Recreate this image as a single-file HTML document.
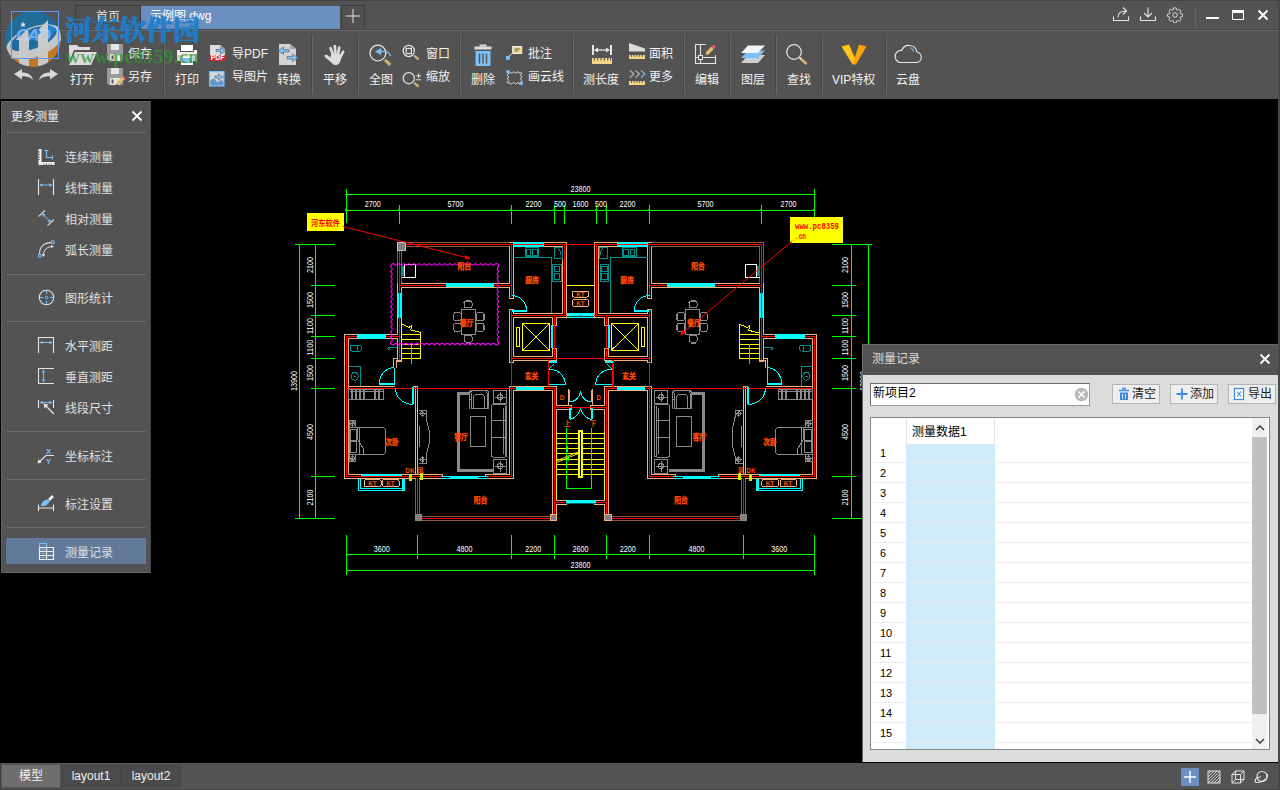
<!DOCTYPE html>
<html lang="zh-CN">
<head>
<meta charset="utf-8">
<title>示例图.dwg</title>
<style>
*{box-sizing:border-box;margin:0;padding:0}
html,body{width:1280px;height:790px;overflow:hidden;background:#000}
body{position:relative;font-family:"Liberation Sans","Noto Sans CJK SC",sans-serif;font-size:13px;color:#e6e6e6}
.abs{position:absolute}
#top{position:absolute;left:0;top:0;width:1280px;height:99px;background:#535353;border-top:1px solid #444;border-left:1px solid #444}
#hline{position:absolute;left:1px;top:29px;width:1279px;height:2px;background:#6a6a6a;border-top:1px solid #464646}
.tab{position:absolute;top:5px;height:24px;line-height:22px;font-size:12px;color:#e8e8e8}
#tab1{left:75px;width:66px;text-align:center;background:#515151;border:1px solid #3e3e3e;border-bottom:none}
#tab2{left:141px;top:6px;height:23px;line-height:21px;width:199px;background:#6a8fc0;padding-left:9px;color:#fff}
#tab3{left:341px;width:24px;background:#515151;border:1px solid #3e3e3e;border-bottom:none}
.lbl{position:absolute;font-size:12px;line-height:16px;color:#f2f2f2;white-space:nowrap}
.sep{position:absolute;top:35px;width:1px;height:59px;background:#464646;border-right:1px solid #686868;box-sizing:content-box}
#canvas{position:absolute;left:0;top:99px;width:1280px;height:664px;background:#000}
#status{position:absolute;left:0;top:763px;width:1280px;height:27px;background:#535353;border-left:1px solid #444;border-bottom:1px solid #444}
.stab{position:absolute;top:2px;height:22px;line-height:20px;text-align:center;font-size:12px;color:#f0f0f0;background:#4b4b4b;border:1px solid #454545}
#lp{position:absolute;left:1px;top:101px;width:150px;height:472px;background:#535353;border:1px solid #656565;border-right:1px solid #444}
#lp .hd{position:absolute;left:9px;top:5px;font-size:12px;color:#f0f0f0}
#lp .ln{position:absolute;left:4px;width:140px;height:1px;background:#6a6a6a}
#lp .it{position:absolute;left:63px;font-size:12px;line-height:16px;color:#e0e0e0;white-space:nowrap}
#rp{position:absolute;left:862px;top:344px;width:416px;height:418px;background:#dcdcdc;border-left:1px solid #6a6a6a}
#rp .hd{position:absolute;left:0;top:0;width:415px;height:31px;background:#535353;border-top:1px solid #6a6a6a}

.btn{position:absolute;top:40px;width:48px;height:20px;background:#eeeeee;border:1px solid #b4b4b4;font-size:12px;line-height:16px;color:#222;padding:1px 0 0 19px;white-space:nowrap}
#tbl{position:absolute;left:7px;top:73px;width:400px;height:333px;background:#fff;border:1px solid #828790;overflow:hidden}
#tbl .rn{position:absolute;left:9px;font-size:11px;line-height:16px;color:#000;font-family:"Liberation Sans",sans-serif}
#tbl .rl{position:absolute;left:2px;width:379px;height:1px;background:rgba(235,235,235,.95)}
</style>
</head>
<body>
<div id="canvas"></div>
<!--CAD--><svg class="abs" style="left:0;top:0" width="1280" height="790" viewBox="0 0 1280 790" fill="none"><g shape-rendering="crispEdges">
<g id="hf"><path d="M399.7 244.5L511.5 244.5M399.7 244.5L399.7 285.5M417.5 478.6L417.5 518.5M417.5 518.5L554.6 518.5" stroke="#8a5a46" stroke-width="5" fill="none" stroke-linecap="square"/><path d="M399.7 285.5L511.5 285.5M399.7 285.5L399.7 359.0M511.5 244.5L511.5 296.0M511.5 311.0L511.5 360.5M511.5 244.5L564.7 244.5M564.7 244.5L564.7 315.5M511.5 315.5L564.7 315.5M511.5 358.5L554.6 358.5M554.6 315.5L554.6 323.5M554.6 350.5L554.6 358.5M346.5 336.6L399.7 336.6M346.5 336.6L346.5 476.6M346.5 476.6L440.6 476.6M487.8 476.6L511.5 476.6M511.5 388.5L511.5 476.6M511.5 388.5L554.6 388.5M554.6 388.5L554.6 514.0M554.6 502.5L564.5 502.5M554.6 407.5L569.0 407.5" stroke="#f2b27c" stroke-width="5" fill="none" stroke-linecap="square"/><path d="M399.7 244.5L511.5 244.5M399.7 244.5L399.7 285.5M417.5 478.6L417.5 518.5M417.5 518.5L554.6 518.5M399.7 285.5L511.5 285.5M399.7 285.5L399.7 359.0M511.5 244.5L511.5 296.0M511.5 311.0L511.5 360.5M511.5 244.5L564.7 244.5M564.7 244.5L564.7 315.5M511.5 315.5L564.7 315.5M511.5 358.5L554.6 358.5M554.6 315.5L554.6 323.5M554.6 350.5L554.6 358.5M346.5 336.6L399.7 336.6M346.5 336.6L346.5 476.6M346.5 476.6L440.6 476.6M487.8 476.6L511.5 476.6M511.5 388.5L511.5 476.6M511.5 388.5L554.6 388.5M554.6 388.5L554.6 514.0M554.6 502.5L564.5 502.5M554.6 407.5L569.0 407.5" stroke="#000" stroke-width="3" fill="none" stroke-linecap="square"/><path d="M415.3 386.6L415.3 474.0M417.6 386.6L417.6 474.0M413.4 386.6L417.6 386.6M349.0 386.0L395.0 386.0M401.7 355.0L401.7 360.3L396.0 360.3L396.0 367.7M397.6 358.2L393.8 358.2L393.8 367.7M556.3 388.5L556.3 405.6L568.9 405.6L568.9 388.5M556.5 500.0L556.5 409.4L569.0 409.4" stroke="#f2b27c" stroke-width="1" fill="none" /><path d="M399.7 244.5L511.5 244.5M399.7 244.5L399.7 285.5M417.5 478.6L417.5 518.5M417.5 518.5L554.6 518.5M399.7 285.5L511.5 285.5M399.7 285.5L399.7 359.0M511.5 244.5L511.5 296.0M511.5 311.0L511.5 360.5M511.5 244.5L564.7 244.5M564.7 244.5L564.7 315.5M511.5 315.5L564.7 315.5M511.5 358.5L554.6 358.5M554.6 315.5L554.6 323.5M554.6 350.5L554.6 358.5M346.5 336.6L399.7 336.6M346.5 336.6L346.5 476.6M346.5 476.6L440.6 476.6M487.8 476.6L511.5 476.6M511.5 388.5L511.5 476.6M511.5 388.5L554.6 388.5M554.6 388.5L554.6 514.0M554.6 502.5L564.5 502.5M554.6 407.5L569.0 407.5M554.6 315.5L554.6 358.5M346.5 388.5L511.5 388.5M511.5 360.5L511.5 388.5M548.2 360.5L548.2 388.5M554.6 358.5L580.5 358.5M564.7 244.5L580.5 244.5M554.6 315.5L580.5 315.5M554.6 407.5L580.5 407.5" stroke="#ff0000" stroke-width="1.4" fill="none" stroke-linecap="square"/><rect x="446.2" y="283.2" width="47.8" height="4.2" stroke="none" fill="#00ffff" stroke-width="1" /><rect x="397.4" y="293.0" width="4.6" height="24.6" stroke="none" fill="#00ffff" stroke-width="1" /><path d="M399.7 293.0L399.7 317.6" stroke="#ff0000" stroke-width="1" fill="none" /><rect x="513.0" y="242.2" width="31.0" height="4.6" stroke="none" fill="#00ffff" stroke-width="1" /><path d="M514.0 244.5L543.0 244.5" stroke="#ff0000" stroke-width="1" fill="none" /><rect x="356.5" y="334.3" width="29.7" height="4.7" stroke="none" fill="#00ffff" stroke-width="1" /><rect x="551.0" y="325.3" width="2.2" height="23.1" stroke="none" fill="#00ffff" stroke-width="1" /><rect x="566.6" y="313.2" width="13.9" height="4.5" stroke="none" fill="#00ffff" stroke-width="1" /><path d="M566.6 316.2L580.5 316.2" stroke="#000" stroke-width="0.7" fill="none" /><rect x="516.0" y="387.4" width="28.4" height="3.0" stroke="none" fill="#00ffff" stroke-width="1" /><rect x="565.5" y="500.4" width="15.0" height="3.8" stroke="none" fill="#00ffff" stroke-width="1" /><path d="M565.5 503.0L580.5 503.0" stroke="#000" stroke-width="0.6" fill="none" /><rect x="361.0" y="474.3" width="41.0" height="1.7" stroke="none" fill="#00ffff" stroke-width="1" /><path d="M358.6 479.0L358.6 490.6L404.6 490.6L404.6 479.0M360.8 479.0L360.8 488.4L402.2 488.4L402.2 479.0" stroke="#00ffff" stroke-width="1" fill="none" /><rect x="402.0" y="479.0" width="3.0" height="11.6" stroke="none" fill="#00ffff" stroke-width="1" /><rect x="440.6" y="475.8" width="47.2" height="2.8" stroke="none" fill="#00ffff" stroke-width="1" /><path d="M440.6 477.2L450.0 477.2M478.0 477.2L487.8 477.2" stroke="#000" stroke-width="1" fill="none" /><path d="M366 479.7h13.500q1.500 0 1.500 1.500v3.800q0 1.500 -1.500 1.500h-13.500q-1.500 0 -1.500 -1.500v-3.800q0 -1.500 1.500 -1.500Z M384.200 479.700h13.500q1.500 0 1.500 1.500v3.800q0 1.500 -1.500 1.500h-13.500q-1.500 0 -1.500 -1.500v-3.800q0 -1.500 1.500 -1.500Z" stroke="#f2b27c" stroke-width="1" fill="none" /><path d="M574 291h6.500M574 297h6.500M574 291q-1.700 0 -1.700 1.500v3q0 1.500 1.700 1.500 M574 299.800h6.500M574 306.400h6.500M574 299.800q-1.700 0 -1.700 1.600v3.400q0 1.600 1.700 1.600" stroke="#f2b27c" stroke-width="1" fill="none" /><path d="M566.6 285.4L580.5 285.4" stroke="#ffff00" stroke-width="1" fill="none" /><rect x="409.0" y="474.4" width="3.0" height="6.1" stroke="none" fill="#c8f000" stroke-width="1" /><rect x="420.0" y="473.0" width="3.0" height="7.0" stroke="none" fill="#c8f000" stroke-width="1" /><path d="M512 310.800H526.700" stroke="#00ffff" stroke-width="2" fill="none" /><path d="M526.700 310.800A15.200 15.200 0 0 0 511.500 295.600" stroke="#00ffff" stroke-width="1" fill="none" /><path d="M379.200 384.200H394" stroke="#00ffff" stroke-width="2" fill="none" /><path d="M394.0 367.7L394.0 384.7M394 367.700A15 16.500 0 0 0 379.200 384.200" stroke="#00ffff" stroke-width="1" fill="none" /><path d="M412.800 387.300V404.400" stroke="#00ffff" stroke-width="2" fill="none" /><path d="M395.500 388.500A17.300 16 0 0 0 412.800 404.400" stroke="#00ffff" stroke-width="1" fill="none" /><path d="M548.500 361.500H556.500" stroke="#00ffff" stroke-width="2" fill="none" /><path d="M549 384.700H565.300 M565.300 384.700C565 375 558 369.500 549 369 L554 364" stroke="#00ffff" stroke-width="1" fill="none" /><path d="M569.300 390V402 M569.300 402A11.500 12 0 0 0 580.500 391 M570 408V419.500 M570 419.500C575 418 579 414 580.500 408.500" stroke="#00ffff" stroke-width="1" fill="none" /><path d="M569.500 408V419" stroke="#00ffff" stroke-width="2" fill="none" /><path d="M522.3 323.3L549.9 323.3L549.9 350.6L522.3 350.6ZM522.3 323.3L549.9 350.6M549.9 323.3L522.3 350.6M516.3 327.5L519.7 327.5L519.7 346.5L516.3 346.5Z" stroke="#ffff00" stroke-width="1" fill="none" /><path d="M556.8 433.2L578.5 433.2M556.8 438.3L578.5 438.3M556.8 443.5L578.5 443.5M556.8 448.7L578.5 448.7M556.8 453.8L578.5 453.8M556.8 459.0L578.5 459.0M556.8 464.2L578.5 464.2M556.8 469.3L578.5 469.3M556.8 474.5L578.5 474.5" stroke="#ffff00" stroke-width="1" fill="none" /><path d="M556.8 433.0L556.8 500.0" stroke="#ffff00" stroke-width="1" fill="none" /><path d="M513.4 257.2L551.0 257.2L551.0 313.0M525.0 247.7L538.7 247.7L538.7 256.6L525.0 256.6ZM526.3 249.0L530.8 249.0L530.8 255.3L526.3 255.3ZM532.8 249.0L537.4 249.0L537.4 255.3L532.8 255.3ZM554.0 247.0L562.0 247.0L562.0 258.5L554.0 258.5ZM557 247.500q3.500 1 3.500 7M552.6 264.0L561.0 264.0L561.0 281.0L552.6 281.0ZM554.0 266.0L559.6 266.0L559.6 271.5L554.0 271.5ZM554.0 273.5L559.6 273.5L559.6 279.0L554.0 279.0Z" stroke="#009090" stroke-width="1" fill="none" /><path d="M348.9 366.0L360.0 366.0L360.0 385.5M354.600 372.300a3.600 4 0 1 0 .1 0ZM353.5 376.3L355.7 376.3M352 345h7.500q2 0 2 3t-2 3h-7.500q-1.500 0 -1.500 -3t1.500 -3ZM357.5 345.0L357.5 351.0M388.7 347.5L397.0 347.5M388.700 347.500a1 1 0 1 0 .1 0" stroke="#009090" stroke-width="1" fill="none" /><path d="M461.8 309.4L475.7 309.4L475.7 334.4L461.8 334.4ZM465.5 301.0h5.0q1.5 0 1.5 1.5v3.6q0 1.5 -1.5 1.5h-5.0q-1.5 0 -1.5 -1.5v-3.6q0 -1.5 1.5 -1.5ZM465.5 300.0L470.5 300.0M465.5 335.4h5.0q1.5 0 1.5 1.5v3.6q0 1.5 -1.5 1.5h-5.0q-1.5 0 -1.5 -1.5v-3.6q0 -1.5 1.5 -1.5ZM465.5 343.0L470.5 343.0M455.3 312.7h4.2q1.5 0 1.5 1.5v4.8q0 1.5 -1.5 1.5h-4.2q-1.5 0 -1.5 -1.5v-4.8q0 -1.5 1.5 -1.5ZM455.3 323.3h4.2q1.5 0 1.5 1.5v5.0q0 1.5 -1.5 1.5h-4.2q-1.5 0 -1.5 -1.5v-5.0q0 -1.5 1.5 -1.5ZM478.0 312.7h4.2q1.5 0 1.5 1.5v4.8q0 1.5 -1.5 1.5h-4.2q-1.5 0 -1.5 -1.5v-4.8q0 -1.5 1.5 -1.5ZM478.0 323.3h4.2q1.5 0 1.5 1.5v5.0q0 1.5 -1.5 1.5h-4.2q-1.5 0 -1.5 -1.5v-5.0q0 -1.5 1.5 -1.5ZM453.3 314.0L453.3 319.5M453.3 324.6L453.3 330.0M484.3 314.0L484.3 319.5M484.3 324.6L484.3 330.0M348.9 389.0L383.0 389.0L383.0 399.6L348.9 399.6ZM349.0 427.4L383.5 427.4L385.2 429.0L385.2 453.0L383.5 454.6L349.0 454.6ZM350.0 429.5L356.5 429.5L356.5 440.5L350.0 440.5ZM350.0 441.5L356.5 441.5L356.5 452.5L350.0 452.5ZM357.8 427.4L357.8 440.0L363.5 449.0L363.5 454.6M359.8 427.4L359.8 454.6M349.0 420.2L355.8 420.2L355.8 427.0L349.0 427.0ZM352.400 421.6a2 2 0 1 0 .1 0ZM349.0 423.6L355.8 423.6M352.4 420.2L352.4 427.0M349.0 454.9L355.8 454.9L355.8 461.8L349.0 461.8ZM352.400 456.3a2 2 0 1 0 .1 0ZM349.0 458.4L355.8 458.4M352.4 454.9L352.4 461.8M418.5 410.0L426.0 410.0L426.0 417.5L429.0 430.0L429.0 444.0L426.0 456.0L426.0 463.4L418.5 463.4M422.200 411.8a2 2 0 1 0 .1 0ZM419.0 413.8L425.5 413.8M422.2 410.3L422.2 417.3M422.200 457.5a2 2 0 1 0 .1 0ZM419.0 459.5L425.5 459.5M422.2 456.0L422.2 463.0M471 408.800V392.500q0 -2.300 2.500 -2.300h11q2.500 0 2.500 2.300V408.800ZM473.4 408.8L473.4 396.5L475.0 394.8L483.0 394.8L484.7 396.5L484.7 408.8M469.4 399.0L471.0 399.0M487.0 399.0L488.7 399.0M469.4 408.8L469.4 392.0L471.0 390.2M488.7 408.8L488.7 392.0L487.0 390.2M493.2 390.4L506.8 390.4L506.8 403.7L493.2 403.7ZM500 394.4a2.600 2.600 0 1 0 .1 0ZM494.5 397.0L505.5 397.0M500.0 391.9L500.0 402.2M493.2 459.3L506.8 459.3L506.8 473.0L493.2 473.0ZM500 463.5a2.600 2.600 0 1 0 .1 0ZM494.5 466.1L505.5 466.1M500.0 460.8L500.0 471.5M491.300 406.500q0 -2 2 -2h11.200q2 0 2 2V455q0 2 -2 2h-11.200q-2 0 -2 -2ZM491.3 420.8L505.0 420.8M491.3 437.5L505.0 437.5M505.0 406.0L505.0 455.5M503.0 408.0L503.0 454.0M470.0 416.4L485.0 416.4L485.0 446.4L470.0 446.4Z" stroke="#8a8a8a" stroke-width="1" fill="none" /><path d="M470.0 393.8L458.0 393.8L458.0 470.6L492.5 470.6" stroke="#8a8a8a" stroke-width="3" fill="none" /><path d="M349.5 391.5L382.5 391.5M352.0 390.0L352.0 398.5M356.0 390.0L356.0 398.5M360.0 390.0L360.0 398.5M364.0 390.0L364.0 398.5M375.0 390.0L375.0 398.5M379.0 390.0L379.0 398.5" stroke="#8a8a8a" stroke-width="1.5" fill="none" /><rect x="418.8" y="426.0" width="1.4" height="21.0" stroke="none" fill="#8a8a8a" stroke-width="1" /></g>
<use href="#hf" transform="translate(1161.0 0) scale(-1 1)"/>
<path d="M401.6 334.4L420.6 334.4M401.6 339.5L420.6 339.5M401.6 344.0L420.6 344.0M401.6 348.4L420.6 348.4M401.6 353.2L420.6 353.2M401.6 358.5L420.6 358.5M401.6 358.5L401.6 324.0L409.0 327.3L411.5 325.8L410.8 330.0L420.6 332.5L420.6 358.5" stroke="#ffff00" stroke-width="1" fill="none" /><path d="M411.5 344.6L411.5 363.5" stroke="#00ff00" stroke-width="1" fill="none" />
<path d="M739.5 334.4L759.3 334.4M739.5 339.5L759.3 339.5M739.5 344.0L759.3 344.0M739.5 348.4L759.3 348.4M739.5 353.2L759.3 353.2M739.5 358.5L759.3 358.5M739.5 358.5L739.5 324.2L747.0 327.4L749.4 326.0L748.8 330.3L759.1 333.0" stroke="#ffff00" stroke-width="1" fill="none" /><path d="M749.9 344.4L749.9 363.7" stroke="#00ff00" stroke-width="1" fill="none" />
<rect x="578.5" y="430.2" width="4.1" height="47.4" stroke="#ffff00" fill="#ffff00" stroke-width="1" /><path d="M580.5 432.0L580.5 475.5" stroke="#000" stroke-width="1" fill="none" />
<path d="M566.6 427.9L566.6 488.5L591.5 488.5L591.5 427.9" stroke="#00ff00" stroke-width="1" fill="none" />
<path d="M566.600 449l1 -3v6ZM567.200 459l1.200 -3.500l.4 5Z" stroke="#00ff00" stroke-width="0.6" fill="#00ff00" />
<rect x="397.5" y="242.5" width="8.0" height="8.0" stroke="#c0c0c0" fill="#808080" stroke-width="1" />
<rect x="415.0" y="514.0" width="6.0" height="6.0" stroke="#8a8a8a" fill="#808080" stroke-width="1" />
<rect x="550.2" y="514.0" width="6.4" height="6.0" stroke="#f2b27c" fill="#808080" stroke-width="1" />
<rect x="604.6" y="514.0" width="6.4" height="6.0" stroke="#f2b27c" fill="#808080" stroke-width="1" />
<rect x="740.0" y="514.0" width="6.0" height="6.0" stroke="#8a8a8a" fill="#808080" stroke-width="1" />
<rect x="401.5" y="266.0" width="2.5" height="10.0" stroke="none" fill="#009090" stroke-width="1" /><path d="M401.5 277.5L415.9 277.5L415.9 264.5L404.3 264.5L404.3 277.5" stroke="#fff" stroke-width="1" fill="none" />
<rect x="757.0" y="266.0" width="2.5" height="10.0" stroke="none" fill="#009090" stroke-width="1" /><path d="M759.5 277.5L745.1 277.5L745.1 264.5L756.7 264.5L756.7 277.5" stroke="#fff" stroke-width="1" fill="none" />
<path d="M346.5 194.6L814.6 194.6M346.5 210.0L814.6 210.0M346.5 189.0L346.5 223.0M814.6 189.0L814.6 223.0M399.5 205.0L399.5 223.7M511.5 205.0L511.5 223.7M554.6 205.0L554.6 223.7M564.7 205.0L564.7 223.7M596.3 205.0L596.3 223.7M606.3 205.0L606.3 223.7M649.5 205.0L649.5 223.7M761.5 205.0L761.5 223.7M346.5 554.6L814.6 554.6M346.5 570.4L814.6 570.4M346.5 535.0L346.5 575.0M814.6 535.0L814.6 575.0M417.5 535.0L417.5 558.8M511.5 535.0L511.5 558.8M554.6 535.0L554.6 558.8M606.3 535.0L606.3 558.8M649.5 535.0L649.5 558.8M743.5 535.0L743.5 558.8M299.5 244.5L299.5 518.5M315.7 244.5L315.7 518.5M851.8 244.5L851.8 518.5M868.0 244.5L868.0 518.5M295.0 244.5L335.0 244.5M832.0 244.5L872.0 244.5M311.0 285.4L335.0 285.4M832.0 285.4L856.0 285.4M311.0 315.4L335.0 315.4M832.0 315.4L856.0 315.4M311.0 336.6L335.0 336.6M832.0 336.6L856.0 336.6M311.0 358.5L335.0 358.5M832.0 358.5L856.0 358.5M311.0 388.5L335.0 388.5M832.0 388.5L856.0 388.5M311.0 476.7L335.0 476.7M832.0 476.7L856.0 476.7M295.0 518.5L335.0 518.5M832.0 518.5L872.0 518.5" stroke="#00ff00" stroke-width="1" fill="none" />
<path d="M345.5 210.800l1.500 -1.500M398.5 210.800l1.500 -1.500M510.5 210.800l1.500 -1.500M553.6 210.800l1.500 -1.500M563.7 210.800l1.500 -1.500M595.3 210.800l1.500 -1.500M605.3 210.800l1.500 -1.500M648.5 210.800l1.500 -1.500M760.5 210.800l1.500 -1.500M813.6 210.800l1.500 -1.500M345.5 195.400l1.500 -1.500M813.6 195.400l1.500 -1.500" stroke="#00ff00" stroke-width="2" fill="none" />
</g>
<path d="M556.8 460.7L578.5 451.8M556.8 462.4L578.5 453.5" stroke="#ffff00" stroke-width="0.9" fill="none" />
<path d="M393.6 263.5q2.55 3.20 5.11 0q2.55 3.20 5.11 0q2.55 3.20 5.11 0q2.55 3.20 5.11 0q2.55 3.20 5.11 0q2.55 3.20 5.11 0q2.55 3.20 5.11 0q2.55 3.20 5.11 0q2.55 3.20 5.11 0q2.55 3.20 5.11 0q2.55 3.20 5.11 0q2.55 3.20 5.11 0q2.55 3.20 5.11 0q2.55 3.20 5.11 0q2.55 3.20 5.11 0q2.55 3.20 5.11 0q2.55 3.20 5.11 0q2.55 3.20 5.11 0q2.55 3.20 5.11 0q2.55 3.20 5.11 0q3 0 3 3q-3.20 2.52 0 5.03q-3.20 2.52 0 5.03q-3.20 2.52 0 5.03q-3.20 2.52 0 5.03q-3.20 2.52 0 5.03q-3.20 2.52 0 5.03q-3.20 2.52 0 5.03q-3.20 2.52 0 5.03q-3.20 2.52 0 5.03q-3.20 2.52 0 5.03q-3.20 2.52 0 5.03q-3.20 2.52 0 5.03q-3.20 2.52 0 5.03q-3.20 2.52 0 5.03q-3.20 2.52 0 5.03q0 3 -3 3q-2.55 -3.20 -5.11 0q-2.55 -3.20 -5.11 0q-2.55 -3.20 -5.11 0q-2.55 -3.20 -5.11 0q-2.55 -3.20 -5.11 0q-2.55 -3.20 -5.11 0q-2.55 -3.20 -5.11 0q-2.55 -3.20 -5.11 0q-2.55 -3.20 -5.11 0q-2.55 -3.20 -5.11 0q-2.55 -3.20 -5.11 0q-2.55 -3.20 -5.11 0q-2.55 -3.20 -5.11 0q-2.55 -3.20 -5.11 0q-2.55 -3.20 -5.11 0q-2.55 -3.20 -5.11 0q-2.55 -3.20 -5.11 0q-2.55 -3.20 -5.11 0q-2.55 -3.20 -5.11 0q-2.55 -3.20 -5.11 0q-3 0 -3 -3q3.20 -2.52 0 -5.03q3.20 -2.52 0 -5.03q3.20 -2.52 0 -5.03q3.20 -2.52 0 -5.03q3.20 -2.52 0 -5.03q3.20 -2.52 0 -5.03q3.20 -2.52 0 -5.03q3.20 -2.52 0 -5.03q3.20 -2.52 0 -5.03q3.20 -2.52 0 -5.03q3.20 -2.52 0 -5.03q3.20 -2.52 0 -5.03q3.20 -2.52 0 -5.03q3.20 -2.52 0 -5.03q3.20 -2.52 0 -5.03q0 -3 3 -3Z" fill="none" stroke="#ff00ff" stroke-width="1.1"/>
<g shape-rendering="crispEdges"><rect x="307.0" y="213.0" width="37.0" height="18.0" stroke="none" fill="#ffff00" stroke-width="1" /><rect x="790.0" y="217.0" width="53.0" height="26.0" stroke="none" fill="#ffff00" stroke-width="1" /></g>
<path d="M343.0 226.5L469.5 258.3" stroke="#ff0000" stroke-width="1" fill="none" /><path d="M470 258.500l-5 -2.800l.9 3.200Z" stroke="#ff0000" stroke-width="1" fill="#ff0000" />
<path d="M792.3 241.0L681.0 334.5" stroke="#ff0000" stroke-width="1" fill="none" /><path d="M680.500 335l2.300 -4.500l2 2.500Z" stroke="#ff0000" stroke-width="1" fill="#ff0000" />
<text x="372.8" y="206.7" font-size="9" fill="#fff" font-family="Liberation Sans,sans-serif" font-weight="normal" text-anchor="middle" textLength="16.0" lengthAdjust="spacingAndGlyphs" >2700</text><text x="455.6" y="206.7" font-size="9" fill="#fff" font-family="Liberation Sans,sans-serif" font-weight="normal" text-anchor="middle" textLength="16.0" lengthAdjust="spacingAndGlyphs" >5700</text><text x="533.5" y="206.7" font-size="9" fill="#fff" font-family="Liberation Sans,sans-serif" font-weight="normal" text-anchor="middle" textLength="16.0" lengthAdjust="spacingAndGlyphs" >2200</text><text x="560.0" y="206.7" font-size="9" fill="#fff" font-family="Liberation Sans,sans-serif" font-weight="normal" text-anchor="middle" textLength="12.0" lengthAdjust="spacingAndGlyphs" >500</text><text x="580.5" y="206.7" font-size="9" fill="#fff" font-family="Liberation Sans,sans-serif" font-weight="normal" text-anchor="middle" textLength="16.0" lengthAdjust="spacingAndGlyphs" >1600</text><text x="601.0" y="206.7" font-size="9" fill="#fff" font-family="Liberation Sans,sans-serif" font-weight="normal" text-anchor="middle" textLength="12.0" lengthAdjust="spacingAndGlyphs" >500</text><text x="627.5" y="206.7" font-size="9" fill="#fff" font-family="Liberation Sans,sans-serif" font-weight="normal" text-anchor="middle" textLength="16.0" lengthAdjust="spacingAndGlyphs" >2200</text><text x="705.4" y="206.7" font-size="9" fill="#fff" font-family="Liberation Sans,sans-serif" font-weight="normal" text-anchor="middle" textLength="16.0" lengthAdjust="spacingAndGlyphs" >5700</text><text x="788.5" y="206.7" font-size="9" fill="#fff" font-family="Liberation Sans,sans-serif" font-weight="normal" text-anchor="middle" textLength="16.0" lengthAdjust="spacingAndGlyphs" >2700</text><text x="580.5" y="192.0" font-size="9" fill="#fff" font-family="Liberation Sans,sans-serif" font-weight="normal" text-anchor="middle" textLength="20.0" lengthAdjust="spacingAndGlyphs" >23800</text><text x="381.7" y="551.5" font-size="9" fill="#fff" font-family="Liberation Sans,sans-serif" font-weight="normal" text-anchor="middle" textLength="16.0" lengthAdjust="spacingAndGlyphs" >3600</text><text x="464.4" y="551.5" font-size="9" fill="#fff" font-family="Liberation Sans,sans-serif" font-weight="normal" text-anchor="middle" textLength="16.0" lengthAdjust="spacingAndGlyphs" >4800</text><text x="533.3" y="551.5" font-size="9" fill="#fff" font-family="Liberation Sans,sans-serif" font-weight="normal" text-anchor="middle" textLength="16.0" lengthAdjust="spacingAndGlyphs" >2200</text><text x="580.5" y="551.5" font-size="9" fill="#fff" font-family="Liberation Sans,sans-serif" font-weight="normal" text-anchor="middle" textLength="16.0" lengthAdjust="spacingAndGlyphs" >2600</text><text x="627.7" y="551.5" font-size="9" fill="#fff" font-family="Liberation Sans,sans-serif" font-weight="normal" text-anchor="middle" textLength="16.0" lengthAdjust="spacingAndGlyphs" >2200</text><text x="696.6" y="551.5" font-size="9" fill="#fff" font-family="Liberation Sans,sans-serif" font-weight="normal" text-anchor="middle" textLength="16.0" lengthAdjust="spacingAndGlyphs" >4800</text><text x="779.3" y="551.5" font-size="9" fill="#fff" font-family="Liberation Sans,sans-serif" font-weight="normal" text-anchor="middle" textLength="16.0" lengthAdjust="spacingAndGlyphs" >3600</text><text x="580.5" y="567.5" font-size="9" fill="#fff" font-family="Liberation Sans,sans-serif" font-weight="normal" text-anchor="middle" textLength="20.0" lengthAdjust="spacingAndGlyphs" >23800</text><text x="313.0" y="265.0" font-size="9" fill="#fff" font-family="Liberation Sans,sans-serif" font-weight="normal" text-anchor="middle" textLength="16.0" lengthAdjust="spacingAndGlyphs" transform="rotate(-90 313.0 265.0)" >2100</text><text x="847.5" y="265.0" font-size="9" fill="#fff" font-family="Liberation Sans,sans-serif" font-weight="normal" text-anchor="middle" textLength="16.0" lengthAdjust="spacingAndGlyphs" transform="rotate(-90 847.5 265.0)" >2100</text><text x="313.0" y="300.0" font-size="9" fill="#fff" font-family="Liberation Sans,sans-serif" font-weight="normal" text-anchor="middle" textLength="16.0" lengthAdjust="spacingAndGlyphs" transform="rotate(-90 313.0 300.0)" >1500</text><text x="847.5" y="300.0" font-size="9" fill="#fff" font-family="Liberation Sans,sans-serif" font-weight="normal" text-anchor="middle" textLength="16.0" lengthAdjust="spacingAndGlyphs" transform="rotate(-90 847.5 300.0)" >1500</text><text x="313.0" y="326.0" font-size="9" fill="#fff" font-family="Liberation Sans,sans-serif" font-weight="normal" text-anchor="middle" textLength="16.0" lengthAdjust="spacingAndGlyphs" transform="rotate(-90 313.0 326.0)" >1100</text><text x="847.5" y="326.0" font-size="9" fill="#fff" font-family="Liberation Sans,sans-serif" font-weight="normal" text-anchor="middle" textLength="16.0" lengthAdjust="spacingAndGlyphs" transform="rotate(-90 847.5 326.0)" >1100</text><text x="313.0" y="347.5" font-size="9" fill="#fff" font-family="Liberation Sans,sans-serif" font-weight="normal" text-anchor="middle" textLength="16.0" lengthAdjust="spacingAndGlyphs" transform="rotate(-90 313.0 347.5)" >1100</text><text x="847.5" y="347.5" font-size="9" fill="#fff" font-family="Liberation Sans,sans-serif" font-weight="normal" text-anchor="middle" textLength="16.0" lengthAdjust="spacingAndGlyphs" transform="rotate(-90 847.5 347.5)" >1100</text><text x="313.0" y="373.0" font-size="9" fill="#fff" font-family="Liberation Sans,sans-serif" font-weight="normal" text-anchor="middle" textLength="16.0" lengthAdjust="spacingAndGlyphs" transform="rotate(-90 313.0 373.0)" >1500</text><text x="847.5" y="373.0" font-size="9" fill="#fff" font-family="Liberation Sans,sans-serif" font-weight="normal" text-anchor="middle" textLength="16.0" lengthAdjust="spacingAndGlyphs" transform="rotate(-90 847.5 373.0)" >1500</text><text x="313.0" y="432.0" font-size="9" fill="#fff" font-family="Liberation Sans,sans-serif" font-weight="normal" text-anchor="middle" textLength="16.0" lengthAdjust="spacingAndGlyphs" transform="rotate(-90 313.0 432.0)" >4500</text><text x="847.5" y="432.0" font-size="9" fill="#fff" font-family="Liberation Sans,sans-serif" font-weight="normal" text-anchor="middle" textLength="16.0" lengthAdjust="spacingAndGlyphs" transform="rotate(-90 847.5 432.0)" >4500</text><text x="313.0" y="497.5" font-size="9" fill="#fff" font-family="Liberation Sans,sans-serif" font-weight="normal" text-anchor="middle" textLength="16.0" lengthAdjust="spacingAndGlyphs" transform="rotate(-90 313.0 497.5)" >2100</text><text x="847.5" y="497.5" font-size="9" fill="#fff" font-family="Liberation Sans,sans-serif" font-weight="normal" text-anchor="middle" textLength="16.0" lengthAdjust="spacingAndGlyphs" transform="rotate(-90 847.5 497.5)" >2100</text><text x="297.0" y="381.0" font-size="9" fill="#fff" font-family="Liberation Sans,sans-serif" font-weight="normal" text-anchor="middle" textLength="20.0" lengthAdjust="spacingAndGlyphs" transform="rotate(-90 297.0 381.0)" >13900</text><text x="865.5" y="381.0" font-size="9" fill="#fff" font-family="Liberation Sans,sans-serif" font-weight="normal" text-anchor="middle" textLength="20.0" lengthAdjust="spacingAndGlyphs" transform="rotate(-90 865.5 381.0)" >13900</text><text x="464.3" y="268.5" font-size="7.5" fill="#ff4a00" font-family="Liberation Sans,Noto Sans CJK SC,sans-serif" font-weight="bold" text-anchor="middle" textLength="13.5" lengthAdjust="spacingAndGlyphs" stroke="#ff4a00" stroke-width=".35">阳台</text><text x="698.0" y="268.5" font-size="7.5" fill="#ff4a00" font-family="Liberation Sans,Noto Sans CJK SC,sans-serif" font-weight="bold" text-anchor="middle" textLength="13.5" lengthAdjust="spacingAndGlyphs" stroke="#ff4a00" stroke-width=".35">阳台</text><text x="532.0" y="283.0" font-size="7.5" fill="#ff4a00" font-family="Liberation Sans,Noto Sans CJK SC,sans-serif" font-weight="bold" text-anchor="middle" textLength="13.5" lengthAdjust="spacingAndGlyphs" stroke="#ff4a00" stroke-width=".35">厨房</text><text x="627.0" y="283.0" font-size="7.5" fill="#ff4a00" font-family="Liberation Sans,Noto Sans CJK SC,sans-serif" font-weight="bold" text-anchor="middle" textLength="13.5" lengthAdjust="spacingAndGlyphs" stroke="#ff4a00" stroke-width=".35">厨房</text><text x="466.8" y="325.5" font-size="7.5" fill="#ff4a00" font-family="Liberation Sans,Noto Sans CJK SC,sans-serif" font-weight="bold" text-anchor="middle" textLength="13.5" lengthAdjust="spacingAndGlyphs" stroke="#ff4a00" stroke-width=".35">餐厅</text><text x="694.0" y="325.5" font-size="7.5" fill="#ff4a00" font-family="Liberation Sans,Noto Sans CJK SC,sans-serif" font-weight="bold" text-anchor="middle" textLength="13.5" lengthAdjust="spacingAndGlyphs" stroke="#ff4a00" stroke-width=".35">餐厅</text><text x="531.5" y="379.2" font-size="7.5" fill="#ff4a00" font-family="Liberation Sans,Noto Sans CJK SC,sans-serif" font-weight="bold" text-anchor="middle" textLength="13.5" lengthAdjust="spacingAndGlyphs" stroke="#ff4a00" stroke-width=".35">玄关</text><text x="629.0" y="379.2" font-size="7.5" fill="#ff4a00" font-family="Liberation Sans,Noto Sans CJK SC,sans-serif" font-weight="bold" text-anchor="middle" textLength="13.5" lengthAdjust="spacingAndGlyphs" stroke="#ff4a00" stroke-width=".35">玄关</text><text x="392.0" y="445.3" font-size="7.5" fill="#ff4a00" font-family="Liberation Sans,Noto Sans CJK SC,sans-serif" font-weight="bold" text-anchor="middle" textLength="13.5" lengthAdjust="spacingAndGlyphs" stroke="#ff4a00" stroke-width=".35">次卧</text><text x="770.0" y="445.3" font-size="7.5" fill="#ff4a00" font-family="Liberation Sans,Noto Sans CJK SC,sans-serif" font-weight="bold" text-anchor="middle" textLength="13.5" lengthAdjust="spacingAndGlyphs" stroke="#ff4a00" stroke-width=".35">次卧</text><text x="461.0" y="439.5" font-size="7.5" fill="#ff4a00" font-family="Liberation Sans,Noto Sans CJK SC,sans-serif" font-weight="bold" text-anchor="middle" textLength="13.5" lengthAdjust="spacingAndGlyphs" stroke="#ff4a00" stroke-width=".35">客厅</text><text x="699.5" y="439.5" font-size="7.5" fill="#ff4a00" font-family="Liberation Sans,Noto Sans CJK SC,sans-serif" font-weight="bold" text-anchor="middle" textLength="13.5" lengthAdjust="spacingAndGlyphs" stroke="#ff4a00" stroke-width=".35">客厅</text><text x="480.5" y="503.0" font-size="7.5" fill="#ff4a00" font-family="Liberation Sans,Noto Sans CJK SC,sans-serif" font-weight="bold" text-anchor="middle" textLength="13.5" lengthAdjust="spacingAndGlyphs" stroke="#ff4a00" stroke-width=".35">阳台</text><text x="681.0" y="503.0" font-size="7.5" fill="#ff4a00" font-family="Liberation Sans,Noto Sans CJK SC,sans-serif" font-weight="bold" text-anchor="middle" textLength="13.5" lengthAdjust="spacingAndGlyphs" stroke="#ff4a00" stroke-width=".35">阳台</text><text x="372.5" y="486.0" font-size="6.5" fill="#ff4a00" font-family="Liberation Sans,Noto Sans CJK SC,sans-serif" font-weight="bold" text-anchor="middle" >KT</text><text x="390.5" y="486.0" font-size="6.5" fill="#ff4a00" font-family="Liberation Sans,Noto Sans CJK SC,sans-serif" font-weight="bold" text-anchor="middle" >KT</text><text x="770.0" y="486.0" font-size="6.5" fill="#ff4a00" font-family="Liberation Sans,Noto Sans CJK SC,sans-serif" font-weight="bold" text-anchor="middle" >KT</text><text x="788.0" y="486.0" font-size="6.5" fill="#ff4a00" font-family="Liberation Sans,Noto Sans CJK SC,sans-serif" font-weight="bold" text-anchor="middle" >KT</text><text x="580.5" y="296.5" font-size="6.5" fill="#ff4a00" font-family="Liberation Sans,Noto Sans CJK SC,sans-serif" font-weight="bold" text-anchor="middle" >KT</text><text x="580.5" y="305.8" font-size="6.5" fill="#ff4a00" font-family="Liberation Sans,Noto Sans CJK SC,sans-serif" font-weight="bold" text-anchor="middle" >KT</text><text x="562.0" y="399.5" font-size="6.5" fill="#ff4a00" font-family="Liberation Sans,Noto Sans CJK SC,sans-serif" font-weight="bold" text-anchor="middle" >D</text><text x="598.5" y="399.5" font-size="6.5" fill="#ff4a00" font-family="Liberation Sans,Noto Sans CJK SC,sans-serif" font-weight="bold" text-anchor="middle" >D</text><text x="410.0" y="473.0" font-size="6.5" fill="#ff4a00" font-family="Liberation Sans,Noto Sans CJK SC,sans-serif" font-weight="bold" text-anchor="middle" >DK</text><text x="420.5" y="473.0" font-size="6.5" fill="#ff4a00" font-family="Liberation Sans,Noto Sans CJK SC,sans-serif" font-weight="bold" text-anchor="middle" >风</text><text x="741.0" y="473.0" font-size="6.5" fill="#ff4a00" font-family="Liberation Sans,Noto Sans CJK SC,sans-serif" font-weight="bold" text-anchor="middle" >风</text><text x="751.0" y="473.0" font-size="6.5" fill="#ff4a00" font-family="Liberation Sans,Noto Sans CJK SC,sans-serif" font-weight="bold" text-anchor="middle" >DK</text><text x="567.3" y="426.0" font-size="6.5" fill="#ff4a00" font-family="Liberation Sans,Noto Sans CJK SC,sans-serif" font-weight="bold" text-anchor="middle" >上</text><text x="593.0" y="426.0" font-size="6.5" fill="#ff4a00" font-family="Liberation Sans,Noto Sans CJK SC,sans-serif" font-weight="bold" text-anchor="middle" >下</text><text x="325.5" y="225.5" font-size="8" fill="#ff0000" font-family="Liberation Sans,Noto Sans CJK SC,sans-serif" font-weight="bold" text-anchor="middle" textLength="29.0" lengthAdjust="spacingAndGlyphs" >河东软件</text><text x="795.0" y="229.0" font-size="8.5" fill="#ff0000" font-family="Liberation Mono,monospace" font-weight="bold" text-anchor="start" textLength="44.0" lengthAdjust="spacingAndGlyphs" >www.pc0359</text><text x="795.0" y="238.5" font-size="8.5" fill="#ff0000" font-family="Liberation Mono,monospace" font-weight="bold" text-anchor="start" textLength="11.0" lengthAdjust="spacingAndGlyphs" >.cn</text></svg><!--/CAD-->
<div id="top"></div>
<div id="hline"></div>
<div class="tab" id="tab1">首页</div>
<div class="tab" id="tab2">示例图.dwg</div>
<div class="tab" id="tab3"></div>

<!-- toolbar -->
<div id="tb">
<!-- logo box -->

<!-- undo / redo -->
<svg class="abs" style="left:13px;top:68px" width="46" height="14" viewBox="0 0 46 14"><path d="M1 6 L9 1 V4.5 C15 4.5 19 7 20 12 C17 9 14 8.3 9 8.3 V11.5 Z" fill="#d9d9d9"/><path d="M45 6 L37 1 V4.5 C31 4.5 27 7 26 12 C29 9 32 8.3 37 8.3 V11.5 Z" fill="#d9d9d9"/></svg>
<!-- open -->
<svg class="abs" style="left:68px;top:44px" width="30" height="22" viewBox="0 0 30 22"><path d="M1 1 H9 L11 3 H22 V6 H6 L1 19 Z" fill="#dcdcdc"/><path d="M7 8 H29 L23 21 H1 Z" fill="#dcdcdc"/></svg>
<div class="lbl" style="left:70px;top:72px">打开</div>
<!-- save -->
<svg class="abs" style="left:107px;top:44px" width="17" height="18" viewBox="0 0 17 18"><path d="M0 0 H16 V17 H2 L0 15 Z" fill="#9a9a9a"/><rect x="4" y="0" width="8" height="6" fill="#e6e6e6"/><rect x="3" y="10" width="10" height="7" fill="#e6e6e6"/><rect x="4.5" y="11.5" width="2" height="4" fill="#555"/></svg>
<div class="lbl" style="left:128px;top:46px">保存</div>
<!-- save as -->
<svg class="abs" style="left:107px;top:68px" width="19" height="19" viewBox="0 0 19 19"><path d="M0 0 H16 V17 H2 L0 15 Z" fill="#9a9a9a"/><rect x="4" y="0" width="8" height="6" fill="#e6e6e6"/><rect x="3" y="10" width="10" height="7" fill="#e6e6e6"/><rect x="4.5" y="11.5" width="2" height="4" fill="#555"/><path d="M9 17.5 L10 14 L15.5 8.5 L18 11 L12.5 16.5 Z" fill="#e8b969"/><path d="M15 9 L16.3 7.7 L18.8 10.2 L17.5 11.5Z" fill="#e25c5c"/><path d="M9 17.5 L9.6 15.4 L11 16.9Z" fill="#444"/></svg>
<div class="lbl" style="left:128px;top:69px">另存</div>
<div class="sep" style="left:163px"></div>
<!-- print -->
<svg class="abs" style="left:176px;top:44px" width="22" height="22" viewBox="0 0 22 22"><rect x="5" y="1" width="12" height="6" fill="#fff"/><path d="M1 6 H4 V8 H18 V6 H21 V17 H1 Z" fill="#f2f2f2"/><rect x="1" y="11" width="20" height="6" fill="#cfcfcf"/><rect x="5" y="12" width="12" height="9" fill="#fff"/><rect x="6" y="14" width="10" height="5" fill="#7fc0f5"/></svg>
<div class="lbl" style="left:175px;top:72px">打印</div>
<!-- pdf -->
<svg class="abs" style="left:209px;top:44px" width="18" height="18" viewBox="0 0 18 18"><path d="M1 1 H11 L16 5 V17 H1 Z" fill="#dcdcdc"/><rect x="1" y="11" width="15" height="6" fill="#c8292b"/><path d="M7 5.5 H11.5 V3 L17 6.5 L11.5 10 V7.5 H7 Z" fill="#7cc0f8" stroke="#555" stroke-width=".6"/><text x="8.5" y="16.3" font-family="Liberation Sans,sans-serif" font-weight="bold" font-size="6.8" fill="#fff" text-anchor="middle">PDF</text></svg>
<div class="lbl" style="left:232px;top:46px">导PDF</div>
<!-- picture -->
<svg class="abs" style="left:209px;top:71px" width="16" height="16" viewBox="0 0 18 18"><rect x=".75" y=".75" width="16" height="16" fill="#dcdcdc" stroke="#7cc0f8" stroke-width="1.5"/><path d="M1.5 11 C3 8 6 8 7.5 10 L9.5 13 L12 11 C13.5 10 15 10.5 16 12 V16 H1.5 Z" fill="#6695cc"/><path d="M6.5 5.5 H10.5 V3 L16 6.8 L10.5 10.5 V8 H6.5 Z" fill="#7cc0f8" stroke="#555" stroke-width=".6"/></svg>
<div class="lbl" style="left:232px;top:69px">导图片</div>
<!-- convert -->
<svg class="abs" style="left:277px;top:43px" width="23" height="23" viewBox="0 0 23 23"><path d="M2 1 H13 L19 6 V22 H2 Z" fill="#d4d4d4"/><path d="M13 1 V6 H19 Z" fill="#aaa"/><path d="M12 6.5 H6.5 V4 L1 7.8 L6.5 11.5 V9 H12 Z" fill="#7cc0f8" stroke="#555" stroke-width=".6"/><path d="M10 13.5 H15.5 V11 L21 14.8 L15.5 18.5 V16 H10 Z" fill="#7cc0f8" stroke="#555" stroke-width=".6"/></svg>
<div class="lbl" style="left:277px;top:72px">转换</div>
<div class="sep" style="left:311px"></div>
<!-- pan -->
<svg class="abs" style="left:323px;top:43px" width="24" height="24" viewBox="0 0 24 24"><g stroke="#dcdcdc" stroke-width="2.700" stroke-linecap="round" fill="none"><path d="M7.500 5.200 L10.500 12.500"/><path d="M11.800 3 L12.600 12"/><path d="M16.200 4.700 L14.800 12.500"/><path d="M20.200 8.600 L17 14.500"/><path d="M3 13 L8.500 17.500" stroke-width="3"/></g><path d="M8.300 11 L18.500 11.500 C18.500 17 16.500 22 13 22 C9.500 22 8 19.500 6.500 16 Z" fill="#dcdcdc"/></svg>
<div class="lbl" style="left:323px;top:72px">平移</div>
<div class="sep" style="left:357px"></div>
<!-- full view -->
<svg class="abs" style="left:368px;top:43px" width="26" height="25" viewBox="0 0 26 25"><circle cx="9.900" cy="10.100" r="7.900" fill="none" stroke="#e8e8e8" stroke-width="1.200"/><path d="M17 17 L22.300 21.800" stroke="#d9b27c" stroke-width="3" stroke-linecap="butt"/><path d="M7 8.500 L13.200 5 V12 Z" fill="#7cc0f8"/><path d="M13 8.500 C18.500 7.800 21.500 9.500 22.600 13" fill="none" stroke="#7cc0f8" stroke-width="1.400"/></svg>
<div class="lbl" style="left:369px;top:72px">全图</div>
<!-- window zoom -->
<svg class="abs" style="left:402px;top:43px" width="20" height="19" viewBox="0 0 20 19"><circle cx="6.800" cy="8" r="5.600" fill="none" stroke="#e8e8e8" stroke-width="1.200"/><rect x="4.200" y="5.400" width="5.200" height="5.200" fill="none" stroke="#e8e8e8" stroke-width="1.200"/><path d="M12.200 12.700 L16.600 16.500" stroke="#d9b27c" stroke-width="2.200" stroke-linecap="butt"/></svg>
<div class="lbl" style="left:426px;top:46px">窗口</div>
<!-- zoom -->
<svg class="abs" style="left:402px;top:68px" width="22" height="20" viewBox="0 0 22 20"><circle cx="6.800" cy="10.200" r="5.600" fill="none" stroke="#e8e8e8" stroke-width="1.200"/><path d="M12.200 14.900 L16.600 18.700" stroke="#d9b27c" stroke-width="2.200" stroke-linecap="butt"/><path d="M14.300 7.800 h4.600 M16.600 5.500 v4.600 M14.300 11.800 h4.600" stroke="#e8e8e8" stroke-width="1.100"/></svg>
<div class="lbl" style="left:426px;top:69px">缩放</div>
<div class="sep" style="left:459px"></div>
<!-- delete -->
<svg class="abs" style="left:473px;top:43px" width="20" height="24" viewBox="0 0 20 24"><rect x="6.5" y="1.5" width="7" height="2" fill="#dcdcdc"/><rect x="1.5" y="3.5" width="17" height="3" fill="#dcdcdc"/><rect x="2.5" y="8" width="15" height="15" fill="#7cc0f8"/><path d="M6.5 10.5 v10 M10 10.5 v10 M13.5 10.5 v10" stroke="#535353" stroke-width="1.4"/></svg>
<div class="lbl" style="left:471px;top:72px">删除</div>
<!-- annotate -->
<svg class="abs" style="left:505px;top:44px" width="20" height="18" viewBox="0 0 20 18"><rect x="7.700" y="2.500" width="9" height="7" fill="#f6d588" stroke="#f0f0f0" stroke-width="1"/><path d="M9.500 5 h5.500 M9.500 7 h3.500" stroke="#5a5a5a" stroke-width=".9"/><path d="M3 13 L7.500 9" stroke="#d0d0d0" stroke-width="1"/><rect x="1" y="12" width="3.800" height="3.800" fill="#7cc0f8"/></svg>
<div class="lbl" style="left:528px;top:46px">批注</div>
<!-- cloud line -->
<svg class="abs" style="left:504px;top:68px" width="21" height="19" viewBox="0 0 21 19"><path d="M4 4.500 q1.1 -1.5 2.2 0 q1.1 1.5 2.2 0 q1.1 -1.5 2.2 0 q1.1 1.5 2.2 0 q1.1 -1.5 2.2 0 q1.1 1.5 2.2 0 q1.5 .9 0 1.8 q-1.5 .9 0 1.8 q1.5 .9 0 1.8 q-1.5 .9 0 1.8 q1.5 .9 0 1.8 q-1.5 .9 0 1.8 q-1.1 1.5 -2.2 0 q-1.1 -1.5 -2.2 0 q-1.1 1.5 -2.2 0 q-1.1 -1.5 -2.2 0 q-1.1 1.5 -2.2 0 q-1.1 -1.5 -2.2 0 q-1.5 -.9 0 -1.8 q1.5 -.9 0 -1.8 q-1.5 -.9 0 -1.8 q1.5 -.9 0 -1.8 q-1.5 -.9 0 -1.8 q1.5 -.9 0 -1.8 Z" fill="none" stroke="#e6e6e6" stroke-width="1"/><rect x="2.300" y="2.200" width="3.200" height="3.200" fill="#7cc0f8"/><rect x="15.600" y="13.800" width="3.200" height="3.200" fill="#7cc0f8"/></svg>
<div class="lbl" style="left:528px;top:69px">画云线</div>
<div class="sep" style="left:572px"></div>
<!-- measure length -->
<svg class="abs" style="left:591px;top:43px" width="22" height="22" viewBox="0 0 22 22"><path d="M2 2 V12 M20 2 V12" stroke="#e6e6e6" stroke-width="2" fill="none"/><path d="M4 7 H18" stroke="#e6e6e6" stroke-width="1.300"/><path d="M3 7 L7 4.500 V9.500 Z M19 7 L15 4.500 V9.500 Z" fill="#e6e6e6"/><rect x="1" y="15" width="20" height="6" fill="#f6d588"/><path d="M3.500 15 v2.500 M6.800 15 v2.500 M10.100 15 v2.500 M13.400 15 v2.500 M16.700 15 v2.500 M19.500 15 v2.500" stroke="#535353" stroke-width="1.100"/></svg>
<div class="lbl" style="left:583px;top:72px">测长度</div>
<!-- area -->
<svg class="abs" style="left:627px;top:42px" width="20" height="18" viewBox="0 0 20 18"><path d="M2 1 L18 6.500 V9.500 H2 Z" fill="#dcdcdc"/><rect x="2" y="13" width="16" height="4" fill="#f6d588"/><path d="M4.500 13 v1.800 M7.200 13 v1.800 M9.900 13 v1.800 M12.600 13 v1.800 M15.300 13 v1.800" stroke="#535353" stroke-width="1"/></svg>
<div class="lbl" style="left:649px;top:46px">面积</div>
<!-- more -->
<svg class="abs" style="left:627px;top:67px" width="20" height="19" viewBox="0 0 20 19"><path d="M3 3.500 L7 7 L3 10.500 M8.500 3.500 L12.500 7 L8.500 10.500" fill="none" stroke="#b8b8b8" stroke-width="1.100"/><path d="M14 3.500 L18 7 L14 10.500" fill="none" stroke="#7cc0f8" stroke-width="1.100"/><rect x="2" y="14" width="16" height="4" fill="#f6d588"/><path d="M4.500 14 v1.800 M7.200 14 v1.800 M9.900 14 v1.800 M12.600 14 v1.800 M15.300 14 v1.800" stroke="#535353" stroke-width="1"/></svg>
<div class="lbl" style="left:649px;top:69px">更多</div>
<div class="sep" style="left:683px"></div>
<!-- edit -->
<svg class="abs" style="left:694px;top:43px" width="24" height="22" viewBox="0 0 24 22"><path d="M1.500 1.500 H12 M1.500 1.500 V20.500 H21.500 V12 M6.500 1.500 V20.500 M1.500 14.500 H21.500" fill="none" stroke="#e6e6e6" stroke-width="1.1"/><rect x="4.500" y="12.500" width="4" height="4" fill="#535353" stroke="#e6e6e6" stroke-width="1"/><path d="M11 12.500 L12 9 L17.500 3.500 L20 6 L14.500 11.500 Z" fill="#e8b969"/><path d="M17 4 L18.400 2.600 a1.700 1.700 0 0 1 2.500 2.500 L19.500 6.500Z" fill="#e25c5c"/><path d="M11 12.500 L11.600 10.400 L13 11.900Z" fill="#444"/></svg>
<div class="lbl" style="left:695px;top:72px">编辑</div>
<div class="sep" style="left:729px"></div>
<!-- layers -->
<svg class="abs" style="left:740px;top:44px" width="26" height="21" viewBox="0 0 26 21"><path d="M8 11 H25 L18 19 H1 Z" fill="#cfcfcf"/><path d="M8 6.500 H25 L18 14 H1 Z" fill="#7cc0f8"/><path d="M8 1.500 H25 L18 9 H1 Z" fill="#f4f4f4"/></svg>
<div class="lbl" style="left:741px;top:72px">图层</div>
<div class="sep" style="left:775px"></div>
<!-- find -->
<svg class="abs" style="left:785px;top:43px" width="24" height="23" viewBox="0 0 24 23"><circle cx="9" cy="9" r="7.300" fill="none" stroke="#e6e6e6" stroke-width="1.200"/><path d="M15.500 15.500 L21 20.500" stroke="#d9b27c" stroke-width="2.400" stroke-linecap="round"/><path d="M14.300 14.300 L16 16" stroke="#e6e6e6" stroke-width="1.200"/></svg>
<div class="lbl" style="left:787px;top:72px">查找</div>
<div class="sep" style="left:821px"></div>
<!-- vip -->
<svg class="abs" style="left:841px;top:43px" width="26" height="22" viewBox="0 0 26 22"><path d="M0.500 3.500 L8 1.500 L14.500 16 L11.500 21.500 Z" fill="#ffc61a"/><path d="M18 1.500 L25.500 3.500 L15 21.500 H11.500 Z" fill="#f9a30e"/></svg>
<div class="lbl" style="left:832px;top:72px">VIP特权</div>
<div class="sep" style="left:885px"></div>
<!-- cloud -->
<svg class="abs" style="left:893px;top:43px" width="30" height="21" viewBox="0 0 30 21"><path d="M7.500 19.500 H23 a5.300 5.300 0 0 0 1 -10.500 a8 8 0 0 0 -15.300 -1.500 a6 6 0 0 0 -1.200 12 Z" fill="none" stroke="#e6e6e6" stroke-width="1.200"/><path d="M17 4.500 q3 1 3.800 4" fill="none" stroke="#7cc0f8" stroke-width="1.200"/></svg>
<div class="lbl" style="left:896px;top:72px">云盘</div>
<!-- title right icons -->
<svg class="abs" style="left:1112px;top:6px" width="18" height="17" viewBox="0 0 18 17"><path d="M1.500 10.500 V14.500 H16.500 V10.500" fill="none" stroke="#e6e6e6" stroke-width="1.100"/><path d="M6 11.500 C6 7 9 5 14 5 M11 1.500 L14.500 5 L11 8.500" fill="none" stroke="#e6e6e6" stroke-width="1.100"/></svg>
<svg class="abs" style="left:1139px;top:6px" width="18" height="17" viewBox="0 0 18 17"><path d="M1.500 10.500 V14.500 H16.500 V10.500" fill="none" stroke="#e6e6e6" stroke-width="1.100"/><path d="M9 1.500 V11 M5 7 L9 11 L13 7" fill="none" stroke="#e6e6e6" stroke-width="1.100"/></svg>
<svg class="abs" style="left:1167px;top:7px" width="16" height="16" viewBox="0 0 18 18"><path d="M7.600 1 h2.800 l.4 2.100 l1.300 .6 l1.800 -1.200 l2 2 l-1.200 1.800 l.6 1.300 l2.100 .4 v2.800 l-2.100 .4 l-.6 1.300 l1.200 1.800 l-2 2 l-1.800 -1.200 l-1.300 .6 l-.4 2.100 h-2.800 l-.4 -2.100 l-1.300 -.6 l-1.800 1.200 l-2 -2 l1.200 -1.800 l-.6 -1.300 l-2.100 -.4 v-2.800 l2.100 -.4 l.6 -1.300 l-1.200 -1.800 l2 -2 l1.800 1.200 l1.300 -.6 Z" fill="none" stroke="#e6e6e6" stroke-width="1"/><circle cx="9" cy="9" r="2.600" fill="none" stroke="#e6e6e6" stroke-width="1"/></svg>
<div class="abs" style="left:1195px;top:8px;width:1px;height:20px;background:#666"></div>
<div class="abs" style="left:1206px;top:17px;width:13px;height:2px;background:#fff"></div>
<div class="abs" style="left:1232px;top:10px;width:12px;height:10px;border:1px solid #fff;border-top-width:3px"></div>
<svg class="abs" style="left:1257px;top:9px" width="12" height="12" viewBox="0 0 12 12"><path d="M1.500 1.500 L10.500 10.500 M10.500 1.500 L1.500 10.500" stroke="#fff" stroke-width="2"/></svg>
<svg class="abs" style="left:346px;top:9px" width="14" height="14" viewBox="0 0 14 14"><path d="M7 0 V14 M0 7 H14" stroke="#e6e6e6" stroke-width="1"/></svg>
</div>

<!-- watermark -->
<svg class="abs" style="left:0;top:5px" width="70" height="70" viewBox="0 5 70 70">
<defs><clipPath id="lc"><circle cx="33" cy="39" r="28"/></clipPath></defs>
<g clip-path="url(#lc)" opacity=".95">
<rect x="0" y="5" width="70" height="70" fill="#1f6e9e"/>
<path d="M0 46 L9 53 Q30 58 48 50 T63 33 V75 H0Z" fill="#c87b1f"/>
<g transform="rotate(-21 34 41)">
<ellipse cx="34" cy="42" rx="30" ry="15" fill="#cdcdcd"/>
<ellipse cx="34.500" cy="38.500" rx="24.500" ry="10" fill="#1c6ea6"/>
</g>
<path d="M19 66 V40 H15.500 L28 29 L29 38 V66Z" fill="#cfcfcf"/>
<path d="M38 67 V35 L36 32 L48 20 V67Z" fill="#cfcfcf"/>
<path d="M29 33 L38 28 L41 33 L36 36 V40 H29Z" fill="#1e86dc"/>
<path d="M48 25 q7 1 8 5 l-8 10z" fill="#1e86dc"/>
<path d="M17 32 q5 -5 11 -3 l-12 9z" fill="#1e86dc"/>
<path d="M23 21.500 l.9 2 l2.100 .2 l-1.600 1.400 l.5 2.100 l-1.900 -1.100 l-1.900 1.100 l.5 -2.100 l-1.600 -1.400 l2.100 -.2z" fill="#e6e6e6"/>
</g>
</svg>
<div class="abs" style="left:11px;top:11px;width:48px;height:48px;border:1px solid #5b9bf5"></div><div class="abs" style="left:16px;top:26px;width:40px;font-family:'Liberation Sans',sans-serif;font-weight:bold;font-style:italic;font-size:17px;line-height:20px;color:rgba(190,215,255,.55);letter-spacing:-1px">CAD</div>
<div class="abs" id="wm1" style="left:65px;top:9px;font-family:'Noto Serif CJK SC',serif;font-weight:900;font-size:27px;line-height:40px;color:#1e7ecb;-webkit-text-stroke:.7px #1e7ecb;opacity:.92;white-space:nowrap;letter-spacing:0px">河东软件园</div>
<div class="abs" id="wm2" style="left:66px;top:45px;font-family:'Liberation Serif',serif;font-weight:bold;font-size:19px;line-height:24px;color:#2f9a2f;opacity:.72;white-space:nowrap;letter-spacing:.6px">www.pc0359.cn</div>
<div class="abs" style="left:1278px;top:0;width:2px;height:790px;background:#484848;z-index:5"></div>
<div id="status">
 <div class="stab" style="left:1px;width:58px;background:#6e6e6e;border-color:#6e6e6e">模型</div>
 <div class="stab" style="left:60px;width:60px">layout1</div>
 <div class="stab" style="left:120px;width:60px">layout2</div>
 <div class="abs" style="left:1180px;top:5px;width:18px;height:18px;background:#6a8fc0"></div>
 <svg class="abs" style="left:1183px;top:8px" width="12" height="12" viewBox="0 0 12 12"><path d="M6 0 V12 M0 6 H12" stroke="#fff" stroke-width="1.400"/></svg>
 <svg class="abs" style="left:1206px;top:7px" width="14" height="14" viewBox="0 0 14 14"><rect x="1" y="1" width="12" height="12" fill="none" stroke="#e6e6e6" stroke-width="1"/><path d="M1 7 L7 1 M1 10 L10 1 M1 13 L13 1 M4 13 L13 4 M7 13 L13 7 M10 13 L13 10 M1 4 L4 1" stroke="#e6e6e6" stroke-width=".9"/></svg>
 <svg class="abs" style="left:1230px;top:7px" width="14" height="14" viewBox="0 0 14 14"><path d="M1 4.500 H9.500 V13 H1Z M4.500 1 H13 V9.500 M1 4.500 L4.500 1 M9.500 4.500 L13 1 M9.500 13 L13 9.500 M4.500 1 V9.500 H13 M1 13 L4.500 9.500" fill="none" stroke="#e6e6e6" stroke-width="1"/></svg>
 <svg class="abs" style="left:1253px;top:7px" width="15" height="14" viewBox="0 0 15 14"><circle cx="8" cy="6.500" r="5" fill="none" stroke="#e6e6e6" stroke-width="1.100"/><path d="M13.500 4 C14 9 8 13 2 12.500 C-0.500 10 3 6.500 7 7" fill="none" stroke="#e6e6e6" stroke-width="1.100"/></svg>

</div>
<div id="lp"><div class="hd">更多测量</div>
<svg class="abs" style="left:129px;top:8px" width="12" height="12" viewBox="0 0 12 12"><path d="M1.500 1.500 L10.500 10.500 M10.500 1.500 L1.500 10.500" stroke="#fff" stroke-width="1.800"/></svg>
<div class="ln" style="top:30px"></div>
<div class="ln" style="top:172px"></div>
<div class="ln" style="top:219px"></div>
<div class="ln" style="top:329px"></div>
<div class="ln" style="top:377px"></div>
<div class="ln" style="top:425px"></div>
<div class="abs" style="left:4px;top:436px;width:140px;height:26px;background:#62799a"></div>
<div class="it" style="top:48px">连续测量</div>
<div class="it" style="top:79px">线性测量</div>
<div class="it" style="top:110px">相对测量</div>
<div class="it" style="top:141px">弧长测量</div>
<div class="it" style="top:189px">图形统计</div>
<div class="it" style="top:237px">水平测距</div>
<div class="it" style="top:268px">垂直测距</div>
<div class="it" style="top:299px">线段尺寸</div>
<div class="it" style="top:347px">坐标标注</div>
<div class="it" style="top:395px">标注设置</div>
<div class="it" style="top:443px">测量记录</div>
</div>

<svg class="abs" style="left:30px;top:140px" width="40" height="430" viewBox="30 140 40 430" fill="none" stroke-linecap="butt">
<!-- 1 continuous -->
<path d="M38.500 149 H41.500 V162 H54.500 V165 H38.500Z" fill="#f0f0f0"/>
<path d="M38.500 152 h1.500 M38.500 154.500 h1.500 M38.500 157 h1.500 M38.500 159.500 h1.500 M44 165 v-1.500 M46.500 165 v-1.500 M49 165 v-1.500 M51.500 165 v-1.500" stroke="#535353" stroke-width=".8"/>
<path d="M44.500 150.500 h4 M46.500 150.500 V157.500 H52.500 M52.500 155.500 v4" stroke="#7cc0f8" stroke-width="1.200"/>
<!-- 2 linear -->
<path d="M38.500 179 V195 M53.500 179 V195" stroke="#e6e6e6" stroke-width="1.100"/>
<path d="M40 185 H52" stroke="#7cc0f8" stroke-width="1"/><path d="M39.500 185 l3 -1.800 v3.600z M52.500 185 l-3 -1.800 v3.600z" fill="#7cc0f8"/>
<!-- 3 relative -->
<path d="M38.500 216.500 L45 210.500 M47.500 225.500 L54 219.500" stroke="#d0d0d0" stroke-width="1.200"/>
<path d="M43 214.500 L50 221.500" stroke="#7cc0f8" stroke-width="1"/><path d="M42 213.500 l3.600 .8 l-2.800 2.800z M51 222.500 l-3.600 -.8 l2.800 -2.800z" fill="#7cc0f8"/>
<!-- 4 arc -->
<path d="M39.500 254 C39.500 246.500 44.500 242.500 52 242.500" stroke="#d0d0d0" stroke-width="1.300"/>
<path d="M43.500 255 C43.500 250 47 246.500 52.500 246.500" stroke="#e6e6e6" stroke-width="1"/>
<path d="M43.500 257 l-1.800 -2.800 h3.600z M54 246.500 l-2.800 -1.800 v3.600z" fill="#e6e6e6"/>
<rect x="38.500" y="254.500" width="2.500" height="2.500" stroke="#7cc0f8" stroke-width="1"/><rect x="51.500" y="241" width="2.500" height="2.500" stroke="#7cc0f8" stroke-width="1"/>
<!-- 5 stats -->
<circle cx="46.500" cy="297.500" r="7.200" stroke="#e6e6e6" stroke-width="1.100"/>
<circle cx="46.500" cy="297.500" r="1.300" stroke="#7cc0f8" stroke-width="1"/>
<path d="M46.500 291 v3 M46.500 301 v3 M40 297.500 h3 M50 297.500 h3" stroke="#7cc0f8" stroke-width="1.100"/>
<!-- 6 horizontal -->
<path d="M38.500 353 V337.500 H53.500 V353" stroke="#e6e6e6" stroke-width="1.100"/>
<path d="M40 342.500 H52" stroke="#7cc0f8" stroke-width="1"/><path d="M39.500 342.500 l3 -1.800 v3.600z M52.500 342.500 l-3 -1.800 v3.600z" fill="#7cc0f8"/>
<!-- 7 vertical -->
<path d="M54 368.500 H38.500 V383.500 H54" stroke="#e6e6e6" stroke-width="1.100"/>
<path d="M43.500 370 V382" stroke="#7cc0f8" stroke-width="1"/><path d="M43.500 369.500 l-1.800 3 h3.600z M43.500 382.500 l-1.800 -3 h3.600z" fill="#7cc0f8"/>
<!-- 8 segment -->
<path d="M38.500 400 V408 M53.500 400 V408" stroke="#e6e6e6" stroke-width="1.100"/>
<path d="M40 402.500 H52" stroke="#7cc0f8" stroke-width="1"/><path d="M39.500 402.500 l3 -1.800 v3.600z M52.500 402.500 l-3 -1.800 v3.600z" fill="#7cc0f8"/>
<path d="M54 414 L45 405" stroke="#e6e6e6" stroke-width="1.300"/><path d="M43.500 403.500 l5 1 l-4 4z" fill="#e6e6e6"/>
<!-- 9 coords -->
<path d="M54 455.500 H46 L39 462" stroke="#e6e6e6" stroke-width="1.100"/><path d="M37.500 463.500 l1 -4.200 l3.200 3.200z" fill="#e6e6e6"/>
<text x="48.400" y="453.500" font-family="Liberation Sans,sans-serif" font-size="7.500" font-weight="bold" fill="#7cc0f8" text-anchor="middle" stroke="none">X</text>
<text x="48.400" y="463.800" font-family="Liberation Sans,sans-serif" font-size="7.500" font-weight="bold" fill="#7cc0f8" text-anchor="middle" stroke="none">Y</text>
<!-- 10 settings -->
<path d="M49 500 L53 496" stroke="#f0f0f0" stroke-width="2.600"/>
<path d="M40.500 506 C42 501.500 45 499.500 48 499.500 L49.500 501 C49 504 46 506.500 40.500 506Z" fill="#7cc0f8"/>
<path d="M38.500 504.500 V511 M53.500 504.500 V511 M38.500 508 H53.500" stroke="#e6e6e6" stroke-width="1.100"/>
<!-- 11 record -->
<rect x="39.500" y="543.500" width="7" height="4" stroke="#7cc0f8" stroke-width="1.100"/>
<path d="M39.500 547.500 H53.500 V559.500 H39.500Z M39.500 551.500 H53.500 M39.500 555.500 H53.500 M46.500 547.500 V559.500" stroke="#f0f0f0" stroke-width="1.200"/>
<path d="M41.500 549.500 h3 M41.500 553.500 h3 M41.500 557.500 h3" stroke="#7cc0f8" stroke-width="1"/>
</svg>
<div id="rp"><div class="hd"></div>
<div class="abs" style="left:9px;top:7px;font-size:12px;line-height:16px;color:#dedede">测量记录</div>
<svg class="abs" style="left:396px;top:9px" width="12" height="12" viewBox="0 0 12 12"><path d="M1.500 1.500 L10.500 10.500 M10.500 1.500 L1.500 10.500" stroke="#fff" stroke-width="1.800"/></svg>
<div class="abs" style="left:7px;top:39px;width:220px;height:23px;background:#fff;border:1px solid #6b6b6b;border-bottom-color:#9a9a9a;border-right-color:#9a9a9a;font-size:12px;line-height:16px;color:#000;padding:1px 0 0 2px">新项目2</div>
<svg class="abs" style="left:211px;top:43px" width="15" height="15" viewBox="0 0 15 15"><circle cx="7.500" cy="7.500" r="6.800" fill="#b9b9b9"/><path d="M4.500 4.500 L10.500 10.500 M10.500 4.500 L4.500 10.500" stroke="#fff" stroke-width="1.500"/></svg>
<div class="btn" style="left:249px">清空</div>
<div class="btn" style="left:307px">添加</div>
<div class="btn" style="left:365px">导出</div>
<svg class="abs" style="left:255px;top:43px" width="12" height="14" viewBox="0 0 12 14"><path d="M4 1.500 h4 M1 3.500 h10" stroke="#3b8be6" stroke-width="1.400"/><rect x="2" y="5.500" width="8" height="7.500" fill="#3b8be6"/><path d="M4.500 7 v5 M7.500 7 v5" stroke="#e1e1e1" stroke-width="1"/></svg>
<svg class="abs" style="left:313px;top:44px" width="12" height="12" viewBox="0 0 12 12"><path d="M6 0.500 V11.500 M0.500 6 H11.500" stroke="#3b8be6" stroke-width="1.800"/></svg>
<svg class="abs" style="left:370px;top:43px" width="12" height="14" viewBox="0 0 12 14"><rect x="1.500" y="1.500" width="9" height="11" fill="#fff" stroke="#3b8be6" stroke-width="1.200"/><path d="M4 4.500 L8 9.500 M8 4.500 L4 9.500" stroke="#3b8be6" stroke-width="1.200"/></svg>
<div id="tbl">
<div class="abs" style="left:35px;top:0;width:89px;height:331px;background:#d0ebfa"></div>
<div class="abs" style="left:35px;top:0;width:89px;height:26px;background:#fff;border-left:1px solid #e0e0e0;border-right:1px solid #e0e0e0;font-size:12px;line-height:16px;color:#000;padding:6px 0 0 5px">测量数据1</div>
<div class="rn" style="top:27px">1</div><div class="rl" style="top:44px"></div><div class="rn" style="top:47px">2</div><div class="rl" style="top:64px"></div><div class="rn" style="top:67px">3</div><div class="rl" style="top:84px"></div><div class="rn" style="top:87px">4</div><div class="rl" style="top:104px"></div><div class="rn" style="top:107px">5</div><div class="rl" style="top:124px"></div><div class="rn" style="top:127px">6</div><div class="rl" style="top:144px"></div><div class="rn" style="top:147px">7</div><div class="rl" style="top:164px"></div><div class="rn" style="top:167px">8</div><div class="rl" style="top:184px"></div><div class="rn" style="top:187px">9</div><div class="rl" style="top:204px"></div><div class="rn" style="top:207px">10</div><div class="rl" style="top:224px"></div><div class="rn" style="top:227px">11</div><div class="rl" style="top:244px"></div><div class="rn" style="top:247px">12</div><div class="rl" style="top:264px"></div><div class="rn" style="top:267px">13</div><div class="rl" style="top:284px"></div><div class="rn" style="top:287px">14</div><div class="rl" style="top:304px"></div><div class="rn" style="top:307px">15</div><div class="rl" style="top:324px"></div>
<div class="abs" style="left:381px;top:0;width:15px;height:331px;background:#f0f0f0"></div>
<div class="abs" style="left:381px;top:19px;width:15px;height:277px;background:#c1c1c1"></div>
<svg class="abs" style="left:384px;top:7px" width="10" height="6" viewBox="0 0 10 6"><path d="M1 5 L5 1 L9 5" fill="none" stroke="#404040" stroke-width="1.500"/></svg>
<svg class="abs" style="left:384px;top:320px" width="10" height="6" viewBox="0 0 10 6"><path d="M1 1 L5 5 L9 1" fill="none" stroke="#404040" stroke-width="1.500"/></svg>
</div>
</div>
</body>
</html>
